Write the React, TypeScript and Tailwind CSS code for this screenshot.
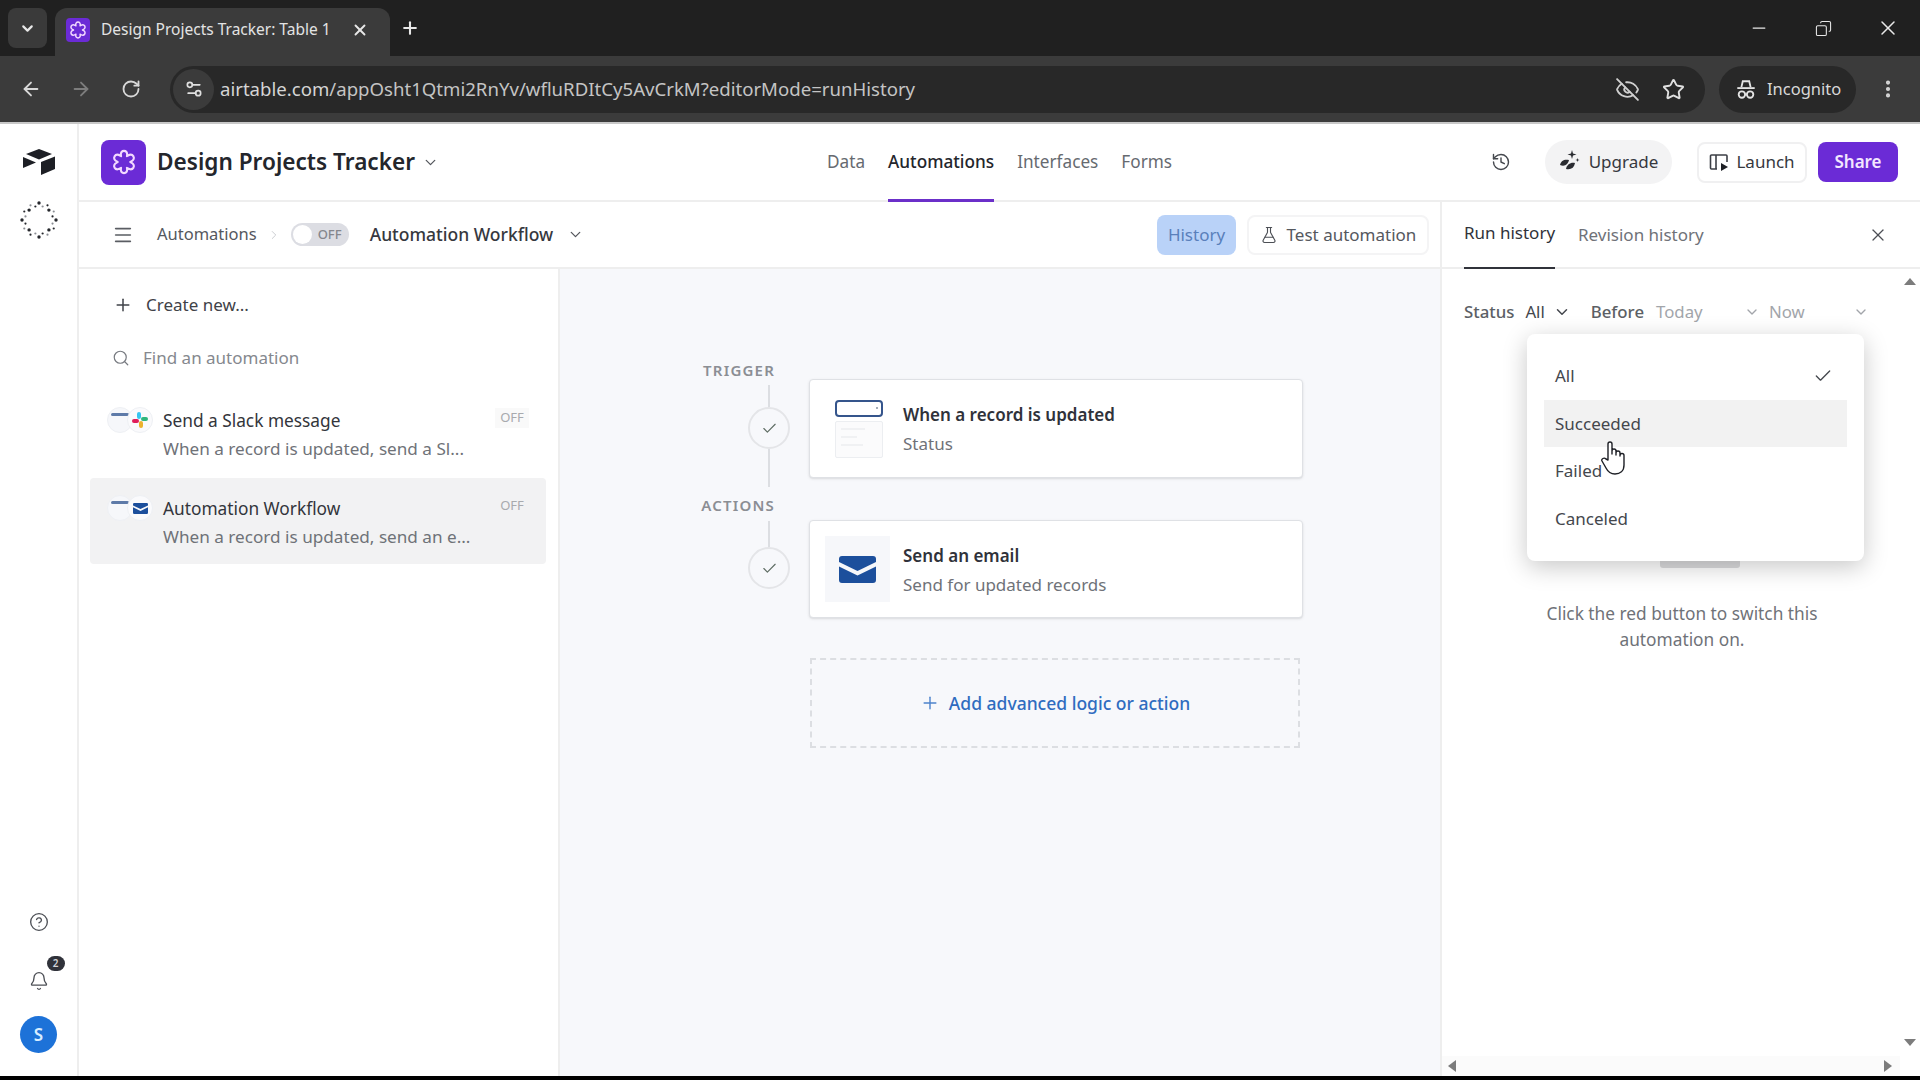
import React from 'react';
import { ArrowLeft, ArrowRight, Bell, Check, ChevronDown, ChevronRight, CircleHelp, Copy, EllipsisVertical, EyeOff, FlaskConical, History, Menu, Minus, Plus, RotateCw, Search, Settings2, Star, X } from 'lucide-react';

function BaseIcon({ size, stroke = '#f3d9ff' }: { size: number; stroke?: string }) {
  return (
    <svg width={size} height={size} viewBox="0 0 24 24" fill="none" stroke={stroke} strokeWidth="1.8" strokeLinejoin="round">
      <path d="M12 2.500c1.800 0 2.900 1.300 2.700 3.500l-.2 1 .9-.5c1.900-1.100 3.800-.8 4.700.7.900 1.600.1 3.300-1.800 4.300l-.9.500.9.500c1.900 1 2.700 2.700 1.800 4.300-.9 1.500-2.800 1.800-4.700.7l-.9-.5.2 1c.2 2.200-.9 3.500-2.700 3.500s-2.900-1.300-2.700-3.500l.2-1-.9.5c-1.900 1.100-3.800.8-4.700-.7-.9-1.600-.1-3.300 1.800-4.300l.9-.5-.9-.5c-1.900-1-2.700-2.700-1.800-4.300.9-1.500 2.800-1.800 4.700-.7l.9.5-.2-1C9.100 3.800 10.200 2.500 12 2.500z" />
    </svg>
  );
}

function AirtableLogo() {
  return (
    <svg width="32" height="26" viewBox="0 0 32 26">
      <path d="M16 0 L29 5 L16 10.500 L3 5 Z" fill="#1d1f25" />
      <path d="M0 8 L13 13.500 L0 19 Z" fill="#1d1f25" />
      <path d="M18 13 L32 7.500 L32 20 L18 26 Z" fill="#1d1f25" />
    </svg>
  );
}

function Spinner() {
  const dots = Array.from({ length: 24 }, (_, i) => i);
  return (
    <svg width="38" height="38" viewBox="0 0 38 38">
      {dots.map((i) => {
        const a = (i / 24) * Math.PI * 2;
        const r = i % 2 === 0 ? 17 : 14;
        return <circle key={i} cx={19 + Math.cos(a) * r} cy={19 + Math.sin(a) * r} r={i % 3 === 0 ? 1.700 : 1.100} fill={i % 3 === 1 ? '#8a8d93' : '#26282d'} />;
      })}
    </svg>
  );
}

function Incognito() {
  return (
    <svg width="22" height="22" viewBox="0 0 24 24" fill="none" stroke="#e4e4e4" strokeWidth="2">
      <path d="M7 10 L8.500 3.500 H15.500 L17 10" />
      <path d="M2.500 11 H21.500" />
      <circle cx="7.500" cy="18" r="3.500" />
      <circle cx="16.500" cy="18" r="3.500" />
      <path d="M11 18 H13" />
    </svg>
  );
}

function LaunchIcon() {
  return (
    <svg width="20" height="20" viewBox="0 0 20 20" fill="none" stroke="#3c3f46" strokeWidth="1.600">
      <path d="M8 17 H2.500 a1 1 0 0 1 -1 -1 V4 a1 1 0 0 1 1 -1 H17 a1 1 0 0 1 1 1 V10" />
      <path d="M7 3 V17" />
      <path d="M12 11 L19 15 L12 19 Z" fill="#1d1f25" stroke="none" />
    </svg>
  );
}

function UpgradeIcon() {
  return (
    <svg width="22" height="24" viewBox="0 0 22 24">
      <path d="M13 0 L14 3.500 L17.500 4.500 L14 5.500 L13 9 L12 5.500 L8.500 4.500 L12 3.500 Z" fill="#2a2c31" />
      <path d="M18.500 8 L19 9.500 L20.500 10 L19 10.500 L18.500 12 L18 10.500 L16.500 10 L18 9.500 Z" fill="#2a2c31" />
      <path d="M1 15 C2 10 6 9 10 10 C9 14 6 17 1 15 Z" fill="#2a2c31" />
      <path d="M7 19 C8 14 12 12 16 13 C15 18 12 20 7 19 Z" fill="#2a2c31" />
    </svg>
  );
}

function SlackGlyph() {
  return (
    <svg width="18" height="18" viewBox="0 0 18 18">
      <rect x="6" y="1" width="4" height="7" rx="2" fill="#36c5f0" />
      <rect x="10" y="6" width="7" height="4" rx="2" fill="#2eb67d" />
      <rect x="8" y="10" width="4" height="7" rx="2" fill="#ecb22e" />
      <rect x="1" y="8" width="7" height="4" rx="2" fill="#e01e5a" />
    </svg>
  );
}

function Envelope({ w, h }: { w: number; h: number }) {
  return (
    <svg width={w} height={h} viewBox="0 0 37 27">
      <path d="M3 0 H34 a3 3 0 0 1 3 3 V6 L18.500 15 L0 6 V3 a3 3 0 0 1 3 -3 Z" fill="#1c4f9c" />
      <path d="M0 10.500 L18.500 19.500 L37 10.500 V24 a3 3 0 0 1 -3 3 H3 a3 3 0 0 1 -3 -3 Z" fill="#1c4f9c" />
    </svg>
  );
}

function TriggerGlyph() {
  return (
    <div className="flex h-[26px] w-[26px] flex-col items-start justify-start rounded-full border border-[#eef0f4] bg-[#f6f7fa] pl-[3px] pt-[5px]">
      <div className="h-[3px] w-[18px] rounded-sm bg-[#5e7aa8]" />
    </div>
  );
}

function Automation({ title, sub, selected, slack }: { title: string; sub: string; selected?: boolean; slack?: boolean }) {
  return (
    <div className={`flex h-[86px] w-[456px] pl-[17px] pr-[14px] ${selected ? 'rounded bg-[#f2f2f3]' : ''}`}>
      <div className="mt-[17px] flex h-[26px] w-[46px] shrink-0">
        <TriggerGlyph />
        <div className="-ml-[6px] flex h-[26px] w-[26px] items-center justify-center rounded-full border border-[#eef0f4] bg-[#fafafc]">
          {slack ? <SlackGlyph /> : <Envelope w={15} h={11} />}
        </div>
      </div>
      <div className="ml-[10px] flex w-[332px] flex-col pt-[18px]">
        <div className="h-[26px] text-[17.300px] leading-[26px] text-[#33353b]">{title}</div>
        <div className="mt-[2px] h-[26px] truncate text-[17.150px] leading-[26px] text-[#6f7278]">{sub}</div>
      </div>
      <div className={`mt-[18px] flex h-[20px] w-[34px] items-center justify-center text-[13px] text-[#a8aaae] ${selected ? '' : 'bg-[#f9f9f9]'}`}>OFF</div>
    </div>
  );
}

function StepRail({ label, top, bottom }: { label: string; top: string; bottom?: string }) {
  return (
    <div className="flex w-[111px] shrink-0 flex-col">
      <div className="h-[18px] whitespace-nowrap pr-[34px] text-right text-[15px] font-semibold leading-[18px] tracking-[1.200px] text-[#8b8e94]">{label}</div>
      <div className={`ml-[70px] w-[2px] bg-[#dcdee2] ${top}`} />
      <div className="ml-[50px] flex h-[42px] w-[42px] items-center justify-center rounded-full border-2 border-[#e4e5e8] bg-[#f7f8fb]">
        <Check size={17} strokeWidth={1.600} className="text-[#5d6b62]" />
      </div>
      {bottom && <div className={`ml-[70px] w-[2px] bg-[#dcdee2] ${bottom}`} />}
    </div>
  );
}

export default function App() {
  return (
    <div className="flex h-[1080px] w-[1920px] flex-col overflow-hidden bg-black font-['Noto_Sans','Open_Sans',sans-serif]">
      {/* Browser tab strip */}
      <div className="flex h-[56px] shrink-0 items-end bg-[#202020] pl-[8px]">
        <div className="mb-[8px] flex h-[40px] w-[39px] items-center justify-center rounded-lg bg-[#3a3a3a]">
          <ChevronDown size={17} strokeWidth={3} className="text-[#e8e8e8]" />
        </div>
        <div className="ml-[8px] flex h-[48px] w-[335px] items-center rounded-t-xl bg-[#3b3b3b] pb-[4px] pl-[11px]">
          <div className="flex h-[24px] w-[24px] items-center justify-center rounded bg-[#6b2bd6]">
            <BaseIcon size={20} />
          </div>
          <div className="ml-[11px] whitespace-nowrap text-[15.500px] text-[#e3e3e3]">Design Projects Tracker: Table 1</div>
          <X size={18} strokeWidth={2.500} className="ml-auto mr-[21px] text-[#e8e8e8]" />
        </div>
        <Plus size={20} strokeWidth={2.500} className="mb-[18px] ml-[10px] text-[#e8e8e8]" />
        <div className="mb-[16px] ml-auto flex items-center">
          <Minus size={20} strokeWidth={1.500} className="text-[#e8e8e8]" />
          <Copy size={17} strokeWidth={1.500} className="ml-[46px] -scale-x-100 text-[#e8e8e8]" />
          <X size={24} strokeWidth={1.500} className="ml-[44px] mr-[20px] text-[#e8e8e8]" />
        </div>
      </div>
      {/* Browser toolbar */}
      <div className="flex h-[68px] shrink-0 items-center border-b-2 border-[#c8c8c8] bg-[#3b3b3b] pl-[20px]">
        <ArrowLeft size={22} strokeWidth={2} className="text-[#d8d8d8]" />
        <ArrowRight size={22} strokeWidth={2} className="ml-[28px] text-[#7d7d7d]" />
        <RotateCw size={20} strokeWidth={2.200} className="ml-[29px] text-[#d8d8d8]" />
        <div className="ml-[29px] flex h-[47px] w-[1535px] items-center rounded-full bg-[#282828]">
          <div className="ml-[3px] flex h-[41px] w-[41px] items-center justify-center rounded-full bg-[#3b3b3b]">
            <Settings2 size={20} className="text-[#e0e0e0]" />
          </div>
          <div className="ml-[6px] text-[18.600px] text-[#d5d5d5]">
            <span>airtable.com</span>
            <span className="text-[#c4c4c4]">/appOsht1Qtmi2RnYv/wfluRDItCy5AvCrkM?editorMode=runHistory</span>
          </div>
          <EyeOff size={25} strokeWidth={1.800} className="ml-auto text-[#d0d0d0]" />
          <Star size={23} strokeWidth={2} className="ml-[22px] mr-[20px] text-[#e0e0e0]" />
        </div>
        <div className="ml-[14px] flex h-[47px] w-[137px] items-center rounded-full bg-[#282828] pl-[16px]">
          <Incognito />
          <span className="ml-[10px] text-[16.500px] text-[#d8d8d8]">Incognito</span>
        </div>
        <EllipsisVertical size={22} strokeWidth={2.500} className="ml-[21px] text-[#d8d8d8]" />
      </div>

      {/* App */}
      <div className="flex h-[952px] shrink-0 bg-white">
        <div className="flex w-[79px] shrink-0 flex-col items-center border-r-2 border-[#eeeeee] pb-[23px] pt-[25px]">
          <AirtableLogo />
          <div className="mt-[26px]"><Spinner /></div>
          <CircleHelp size={20} strokeWidth={1.600} className="mt-auto text-[#4c4f55]" />
          <div className="relative mt-[39px]">
            <Bell size={20} strokeWidth={1.600} className="text-[#4c4f55]" />
            <div className="absolute -right-[16px] -top-[15px] flex h-[15px] w-[18px] items-center justify-center rounded-full bg-[#30323a] text-[10px] font-semibold text-[#d4d4d8]">2</div>
          </div>
          <div className="mt-[25px] flex h-[37px] w-[37px] items-center justify-center rounded-full bg-[#1d72d8] text-[17px] font-semibold text-[#d8edff]">S</div>
        </div>

        <div className="flex min-w-0 flex-1 flex-col">
          {/* App header */}
          <div className="flex h-[78px] shrink-0 items-center border-b-2 border-[#eeeeee]">
            <div className="flex w-[748px] items-center pl-[22px]">
              <div className="flex h-[45px] w-[45px] items-center justify-center rounded-lg bg-[#6b2bd6]">
                <BaseIcon size={28} />
              </div>
              <div className="ml-[11px] text-[22.600px] font-semibold text-[#24262c]">Design Projects Tracker</div>
              <ChevronDown size={17} strokeWidth={1.800} className="ml-[7px] text-[#54575d]" />
            </div>
            <div className="flex h-full items-center gap-[23px] text-[17.200px]">
              <div className="text-[#666a70]">Data</div>
              <div className="-mb-[2px] flex h-[78px] items-center border-b-[3px] border-[#6b2fc9] font-medium text-[#24262c]">Automations</div>
              <div className="text-[#666a70]">Interfaces</div>
              <div className="text-[#666a70]">Forms</div>
            </div>
            <div className="ml-auto flex items-center pr-[22px]">
              <History size={20} strokeWidth={1.700} className="text-[#45484e]" />
              <div className="ml-[34px] flex h-[44px] w-[127px] items-center justify-center gap-[8px] rounded-full bg-[#f3f3f4] text-[17px] text-[#36383e]">
                <UpgradeIcon />
                <span>Upgrade</span>
              </div>
              <div className="ml-[25px] flex h-[41px] w-[110px] items-center justify-center gap-[7px] rounded-lg border-2 border-[#f0f0f1] text-[17px] text-[#36383e]">
                <LaunchIcon />
                <span>Launch</span>
              </div>
              <div className="ml-[11px] flex h-[40px] w-[80px] items-center justify-center rounded-lg bg-[#6b2bd6] text-[17px] font-semibold text-[#f3e6ff]">Share</div>
            </div>
          </div>

          <div className="flex min-h-0 flex-1">
            {/* Center */}
            <div className="flex min-w-0 flex-1 flex-col border-r-2 border-[#eeeeee]">
              <div className="flex h-[67px] shrink-0 items-center border-b-2 border-[#eeeeee] pl-[33px] pr-[11px]">
                <Menu size={22} strokeWidth={1.800} className="text-[#5a5d63]" />
                <div className="ml-[23px] text-[16.500px] text-[#55585e]">Automations</div>
                <ChevronRight size={14} strokeWidth={1.500} className="ml-[10px] text-[#c4c6ca]" />
                <div className="ml-[10px] flex h-[23px] w-[58px] items-center rounded-full bg-[#dcdde3] pl-[2px]">
                  <div className="h-[19px] w-[19px] rounded-full bg-white" />
                  <span className="ml-[6px] text-[13px] font-medium text-[#85878d]">OFF</span>
                </div>
                <div className="ml-[21px] text-[17.500px] font-medium text-[#36383e]">Automation Workflow</div>
                <ChevronDown size={17} strokeWidth={1.800} className="ml-[14px] text-[#54575d]" />
                <div className="ml-auto flex h-[40px] w-[79px] items-center justify-center rounded-lg bg-[#b9d2f8] text-[17px] text-[#5a80bb]">History</div>
                <div className="ml-[11px] flex h-[40px] w-[182px] items-center justify-center gap-[9px] rounded-lg border-2 border-[#f4f4f5] text-[17px] text-[#55585e]">
                  <FlaskConical size={18} strokeWidth={1.500} className="text-[#4c4f55]" />
                  <span>Test automation</span>
                </div>
              </div>
              <div className="flex min-h-0 flex-1">
                {/* Automations list */}
                <div className="flex w-[481px] shrink-0 flex-col border-r-2 border-[#eeeeee] pl-[11px]">
                  <div className="mt-[20px] flex h-[32px] items-center pl-[23px]">
                    <Plus size={20} strokeWidth={1.800} className="text-[#3f4248]" />
                    <span className="ml-[13px] text-[17px] text-[#3f4248]">Create new...</span>
                  </div>
                  <div className="mt-[21px] flex h-[32px] items-center pl-[22px]">
                    <Search size={18} strokeWidth={1.600} className="text-[#777a80]" />
                    <span className="ml-[13px] text-[17px] text-[#85888e]">Find an automation</span>
                  </div>
                  <div className="mt-[16px] flex flex-col gap-[2px]">
                    <Automation title="Send a Slack message" sub="When a record is updated, send a Sl..." slack />
                    <Automation title="Automation Workflow" sub="When a record is updated, send an e..." selected />
                  </div>
                </div>
                {/* Canvas */}
                <div className="flex min-w-0 flex-1 flex-col bg-[#f7f8fb] pl-[138px] pt-[92px]">
                  <div className="flex">
                    <StepRail label="TRIGGER" top="mt-[6px] h-[22px]" bottom="h-[38px]" />
                    <div className="mt-[18px] flex h-[99px] w-[494px] items-center rounded border border-[#dfe1e5] bg-white pl-[25px] shadow-sm">
                      <div className="flex w-[48px] shrink-0 flex-col">
                        <div className="flex h-[17px] items-center justify-end rounded-[4px] border-2 border-[#35558c] pr-[3px]">
                          <div className="h-[2px] w-[2px] bg-[#a4acb8]" />
                        </div>
                        <div className="mt-[4px] flex h-[37px] flex-col gap-[6px] rounded-[2px] border border-[#eceef1] bg-[#fbfbfc] px-[5px] pt-[6px]">
                          <div className="h-[2px] w-[24px] bg-[#f0f1f3]" />
                          <div className="h-[2px] w-[16px] bg-[#f0f1f3]" />
                          <div className="h-[2px] w-[22px] bg-[#f0f1f3]" />
                        </div>
                      </div>
                      <div className="ml-[20px] flex flex-col pt-[2px]">
                        <div className="text-[17px] font-semibold leading-[26px] text-[#30323a]">When a record is updated</div>
                        <div className="mt-[3px] text-[17px] leading-[26px] text-[#6f7278]">Status</div>
                      </div>
                    </div>
                  </div>
                  <div className="mt-[9px] flex">
                    <StepRail label="ACTIONS" top="mt-[7px] h-[26px]" />
                    <div className="mt-[24px] flex h-[98px] w-[494px] items-center rounded border border-[#dfe1e5] bg-white pl-[15px] shadow-sm">
                      <div className="flex h-[66px] w-[65px] shrink-0 items-center justify-center bg-[#f6f7fa]">
                        <Envelope w={37} h={27} />
                      </div>
                      <div className="ml-[13px] flex flex-col pt-[2px]">
                        <div className="text-[17px] font-semibold leading-[26px] text-[#30323a]">Send an email</div>
                        <div className="mt-[3px] text-[17px] leading-[26px] text-[#6f7278]">Send for updated records</div>
                      </div>
                    </div>
                  </div>
                  <div className="ml-[112px] mt-[40px] flex h-[90px] w-[490px] items-center justify-center gap-[9px] border-2 border-dashed border-[#dcdee2] text-[17.500px] font-medium text-[#2f6cc0]">
                    <Plus size={20} strokeWidth={1.700} className="text-[#4d83cc]" />
                    <span>Add advanced logic or action</span>
                  </div>
                </div>
              </div>
            </div>

            {/* Right panel */}
            <div className="relative flex w-[478px] shrink-0 flex-col">
              <div className="flex h-[67px] shrink-0 items-stretch border-b-2 border-[#eeeeee] pl-[22px] pr-[32px]">
                <div className="-mb-[2px] flex w-[91px] items-center justify-center whitespace-nowrap border-b-2 border-[#30323a] pb-[4px] text-[17px] text-[#30323a]">Run history</div>
                <div className="ml-[23px] flex items-center whitespace-nowrap text-[17px] text-[#6f7278]">Revision history</div>
                <X size={20} strokeWidth={1.500} className="my-auto ml-auto text-[#4c4f55]" />
              </div>
              <div className="flex min-h-0 flex-1">
                <div className="flex min-w-0 flex-1 flex-col">
                  <div className="mt-[30px] flex h-[26px] items-center pl-[22px] text-[16.800px]">
                    <span className="font-medium text-[#5c5f65]">Status</span>
                    <span className="ml-[11px] text-[#44474d]">All</span>
                    <ChevronDown size={18} className="ml-[8px] text-[#44474d]" />
                    <span className="ml-[20px] font-medium text-[#5c5f65]">Before</span>
                    <span className="ml-[12px] w-[88px] text-[#a2a5aa]">Today</span>
                    <ChevronDown size={16} className="text-[#a2a5aa]" />
                    <span className="ml-[9px] w-[84px] text-[#a2a5aa]">Now</span>
                    <ChevronDown size={16} className="text-[#a2a5aa]" />
                  </div>
                  <div className="ml-[218px] mt-[231px] h-[12px] w-[80px] rounded-b-[3px] bg-[#dcdcde]" />
                  <div className="mt-[33px] w-[458px] pl-[22px] text-center text-[17.300px] leading-[26px] text-[#6f7278]">
                    <div>Click the red button to switch this</div>
                    <div>automation on.</div>
                  </div>
                  <div className="mt-auto flex h-[20px] items-center justify-between bg-[#fbfbfb] pl-[6px] pr-[8px]">
                    <div className="h-0 w-0 border-y-[6px] border-r-[8px] border-y-transparent border-r-[#7c7c7c]" />
                    <div className="h-0 w-0 border-y-[6px] border-l-[8px] border-y-transparent border-l-[#7c7c7c]" />
                  </div>
                </div>
                <div className="flex w-[20px] shrink-0 flex-col items-center justify-between pb-[30px] pt-[9px]">
                  <div className="h-0 w-0 border-x-[6px] border-b-[7px] border-x-transparent border-b-[#7c7c7c]" />
                  <div className="h-0 w-0 border-x-[6px] border-t-[7px] border-x-transparent border-t-[#7c7c7c]" />
                </div>
              </div>
              {/* Dropdown menu */}
              <div className="absolute left-[85px] top-[132px] flex h-[227px] w-[337px] flex-col rounded-lg bg-white px-[17px] pt-[18px] shadow-[0_6px_24px_rgba(0,0,0,0.22)]">
                <div className="flex h-[48px] items-center justify-between pl-[11px] pr-[14px] text-[17px] text-[#44474d]">
                  <span>All</span>
                  <Check size={20} strokeWidth={1.600} className="text-[#44474d]" />
                </div>
                <div className="flex h-[47px] items-center bg-[#f2f2f2] pl-[11px] text-[17px] text-[#44474d]">Succeeded</div>
                <div className="flex h-[48px] items-center pl-[11px] text-[17px] text-[#44474d]">Failed</div>
                <div className="flex h-[48px] items-center pl-[11px] text-[17px] text-[#44474d]">Canceled</div>
              </div>
              {/* Hand cursor */}
              <svg className="absolute left-[159px] top-[238px]" width="24" height="36" viewBox="0 0 24 36" fill="#ffffff" stroke="#1d1f25" strokeWidth="1.400" strokeLinejoin="round">
                <path d="M7 20 V4 a2 2 0 0 1 4 0 V14 V11 a2 2 0 0 1 4 0 V15 V13 a2 2 0 0 1 4 0 V16 V15.500 a2 2 0 0 1 4 0 V25 C23 31 19 34 14 34 C9 34 7 32 5 28 L1 21 C0 19 3 17 5 19 Z" />
              </svg>
            </div>
          </div>
        </div>
      </div>
    </div>
  );
}
